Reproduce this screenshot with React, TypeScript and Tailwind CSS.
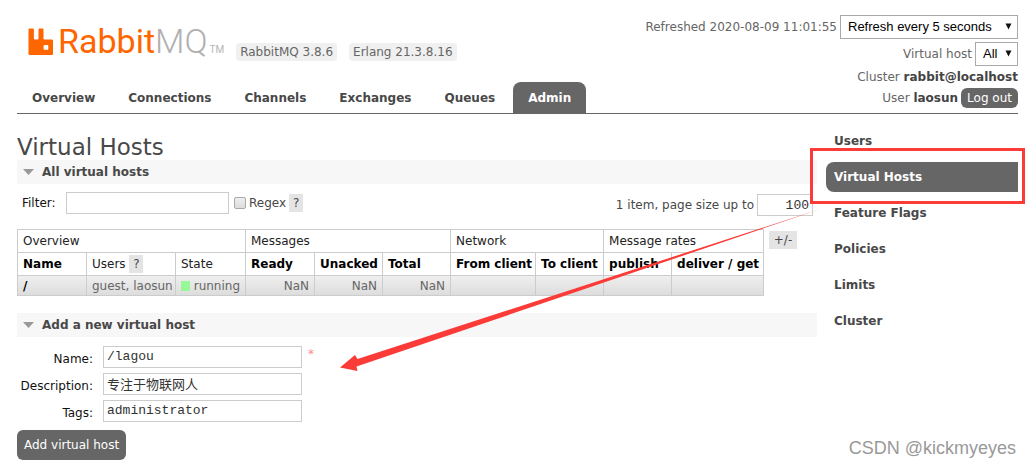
import type { ReactNode } from 'react';

const tabs = ['Overview', 'Connections', 'Channels', 'Exchanges', 'Queues', 'Admin'];
const adminLinks = ['Users', 'Virtual Hosts', 'Feature Flags', 'Policies', 'Limits', 'Cluster'];

/** Orange rabbit mark with the two-tone word mark. */
function Logo() {
  return (
    <a href="#/" className="flex items-end pb-[5px]" aria-label="RabbitMQ">
      <svg width="26" height="28" viewBox="0 0 26 28" fill="#ff6600" aria-hidden="true">
        <path
          fillRule="evenodd"
          d="M1.6 0.500h3.3q1 0 1 1v9q0 1 1 1h2.600q1 0 1-1V1.500q0-1 1-1h3q1 0 1 1v9q0 1 1 1h7.400q1.100 0 1.100 1.100v13.200q0 1.200-1.100 1.200H1.600q-1.100 0-1.100-1.100V1.500q0-1 1.100-1zM16.500 17q-.9 0-.9.9v2.900q0 .9.9.9h2.900q.9 0 .9-.9v-2.900q0-.9-.9-.9z"
        />
      </svg>
      <span className="pl-1 font-[Roboto,sans-serif] text-[34px] leading-[30px] text-[#ff6600]">
        Rabbit<span className="font-light text-[#b0b0b0]">MQ</span>
      </span>
      <span className="pl-0.5 font-[Roboto,sans-serif] text-[10px] leading-3 text-[#b5b5b5]">TM</span>
    </a>
  );
}

function Help() {
  return (
    <button type="button" className="h-[18px] w-3.5 bg-[#e4e4e4] text-[#484848]" aria-label="Help">
      ?
    </button>
  );
}

/** Drop-down with the small solid arrow. */
function Select({ id, value, className }: { id: string; value: string; className: string }) {
  return (
    <span className={`relative inline-block ${className}`}>
      <select
        id={id}
        className="h-6 w-full appearance-none border border-[#aaa] bg-white pl-[7px] font-['Liberation_Sans',sans-serif] text-[13px] text-black"
      >
        <option>{value}</option>
      </select>
      <svg className="pointer-events-none absolute top-2 right-1.5" width="7" height="7" viewBox="0 0 7 7">
        <path d="M0.5 0.5h6L3.5 6.5z" fill="#111" />
      </svg>
    </span>
  );
}

function Section({ title, children }: { title: string; children: ReactNode }) {
  return (
    <section>
      <h2 className="flex h-6 items-center gap-2 bg-[#f7f7f7] pl-1.5 text-xs font-bold">
        <svg width="11" height="6" viewBox="0 0 11 6" aria-hidden="true">
          <path d="M0 0h11L5.5 6z" fill="#999" />
        </svg>
        {title}
      </h2>
      {children}
    </section>
  );
}

function Field({ id, label, value, required }: { id: string; label: string; value: string; required?: boolean }) {
  return (
    <div className="flex items-center">
      <label htmlFor={id} className="w-[86px] pt-1 pr-2.5 text-right whitespace-nowrap text-[#111]">
        {label}
      </label>
      <input
        id={id}
        defaultValue={value}
        className="h-[22px] w-[199px] border border-[#ccc] px-[3px] pb-0.5 font-['Liberation_Mono','Noto_Sans_CJK_SC',monospace] text-[13px] text-[#333]"
      />
      {required && <span className="self-start pl-1.5 text-[#f88]">*</span>}
    </div>
  );
}

function HostTable() {
  return (
    <table className="w-[747px] table-fixed border-collapse whitespace-nowrap text-black [&_td]:border [&_td]:border-[#ccc] [&_td]:px-[5px] [&_td]:py-0 [&_th]:border [&_th]:border-[#ccc] [&_th]:pr-0 [&_th]:pl-[5px] [&_th]:text-left">
      <colgroup>
        <col className="w-[69px]" />
        <col className="w-[89px]" />
        <col className="w-[70px]" />
        <col className="w-[69px]" />
        <col className="w-[68px]" />
        <col className="w-[68px]" />
        <col className="w-[85px]" />
        <col className="w-[68px]" />
        <col className="w-[68px]" />
        <col />
      </colgroup>
      <thead>
        <tr className="h-[23px] text-[#222] [&>th]:font-normal">
          <th colSpan={3}>Overview</th>
          <th colSpan={3}>Messages</th>
          <th colSpan={2}>Network</th>
          <th colSpan={2}>Message rates</th>
        </tr>
        <tr className="h-[23px]">
          <th>Name</th>
          <th className="font-normal text-[#222]">
            Users <Help />
          </th>
          <th className="font-normal text-[#222]">State</th>
          <th>Ready</th>
          <th>Unacked</th>
          <th>Total</th>
          <th>From client</th>
          <th>To client</th>
          <th>publish</th>
          <th>deliver / get</th>
        </tr>
      </thead>
      <tbody>
        <tr className="h-5 bg-linear-to-b from-[#efefef] to-[#dcdcdc] text-right text-[#666]">
          <td className="text-left font-bold text-black">
            <a href="#/vhosts/%2F">/</a>
          </td>
          <td className="text-left">guest, laosun</td>
          <td className="text-left">
            <span className="flex items-center gap-1">
              <span className="size-2.5 bg-[#98f898]" />
              running
            </span>
          </td>
          <td>NaN</td>
          <td>NaN</td>
          <td>NaN</td>
          <td />
          <td />
          <td />
          <td />
        </tr>
      </tbody>
    </table>
  );
}

/** Red call-out arrow from the side menu to the form. */
function Arrow() {
  return (
    <svg
      className="pointer-events-none absolute top-[206px] right-[209px]"
      width="482"
      height="166"
      viewBox="0 0 482 166"
      fill="#fb3b38"
      aria-hidden="true"
    >
      <path d="M482 2.5L17.5 153L15 149L0 161.5L17.5 165L16.5 160.5z" />
    </svg>
  );
}

export default function App() {
  return (
    <div className="relative min-h-[468px] overflow-x-hidden bg-white font-['DejaVu_Sans',Verdana,sans-serif] text-xs leading-4 text-[#484848]">
      <header className="mr-[13px] ml-[17px] flex justify-between border-b border-[#666]">
        <div className="flex flex-col justify-between">
          <div className="flex items-end gap-3 pt-[26px] pl-[11px]">
            <Logo />
            <span className="rounded bg-[#f0f0f0] px-1 py-px text-[#666]">RabbitMQ 3.8.6</span>
            <span className="rounded bg-[#f0f0f0] px-1 py-px text-[#666]">Erlang 21.3.8.16</span>
          </div>
          <nav className="flex gap-[3px]">
            {tabs.map((tab) => (
              <a
                key={tab}
                href={`#/${tab.toLowerCase()}`}
                className={
                  tab === 'Admin'
                    ? 'rounded-t-lg bg-[#666] px-[15px] pt-2 pb-[7px] font-bold text-white'
                    : 'px-[15px] pt-2 pb-[7px] font-bold'
                }
              >
                {tab}
              </a>
            ))}
          </nav>
        </div>
        <div className="flex flex-col items-end gap-[3px] pt-[15px] pb-[5px] text-[#666]">
          <div className="flex items-center gap-[3px]">
            <label htmlFor="refresh">Refreshed 2020-08-09 11:01:55</label>
            <Select id="refresh" value="Refresh every 5 seconds" className="w-[178px]" />
          </div>
          <div className="flex items-center gap-[3px]">
            <label htmlFor="vhost">Virtual host</label>
            <Select id="vhost" value="All" className="w-[43px]" />
          </div>
          <div>
            Cluster <b className="text-[#444]">rabbit@localhost</b>
          </div>
          <div className="flex items-center gap-[3px]">
            <span>
              User <b className="text-[#444]">laosun</b>
            </span>
            <button type="button" className="h-5 rounded-md bg-[#666] px-1.5 text-white">
              Log out
            </button>
          </div>
        </div>
      </header>

      <div className="mr-[13px] ml-[17px] flex gap-[9px]">
        <main className="min-w-0 flex-1 pt-5">
          <h1 className="text-[23px] leading-[26px]">Virtual Hosts</h1>
          <Section title="All virtual hosts">
            <div className="flex items-start justify-between pt-2">
              <div className="flex items-center pl-[5px]">
                <label htmlFor="filter" className="w-11 text-[#111]">
                  Filter:
                </label>
                <input id="filter" className="h-[22px] w-[163px] border border-[#ccc] px-1" />
                <input
                  id="regex"
                  type="checkbox"
                  className="mr-[3px] ml-[5px] size-3 appearance-none rounded-xs border border-[#aaa] bg-linear-to-b from-[#eee] to-[#ddd]"
                />
                <label htmlFor="regex" className="pr-[3px]">
                  Regex
                </label>
                <Help />
              </div>
              <div className="flex items-center gap-[3px] pt-0.5 pr-1">
                <label htmlFor="page-size">1 item, page size up to</label>
                <input
                  id="page-size"
                  defaultValue="100"
                  className="h-[22px] w-14 border border-[#ccc] px-[3px] text-right font-['Liberation_Mono',monospace] text-[13px] text-[#333]"
                />
              </div>
            </div>
            <div className="flex items-start gap-[5px] pt-[13px]">
              <HostTable />
              <button type="button" className="mt-0.5 h-[18px] w-7 bg-[#e4e4e4]">
                +/-
              </button>
            </div>
          </Section>
          <div className="pt-[17px]">
            <Section title="Add a new virtual host">
              <form className="flex flex-col gap-[5px] pt-[9px]">
                <Field id="name" label="Name:" value="/lagou" required />
                <Field id="description" label="Description:" value="专注于物联网人" />
                <Field id="tags" label="Tags:" value="administrator" />
                <button type="button" className="mt-[3px] h-[30px] self-start rounded-md bg-[#666] px-[7px] text-white">
                  Add virtual host
                </button>
              </form>
            </Section>
          </div>
        </main>

        <nav className="flex w-48 shrink-0 flex-col gap-1.5 pt-3 font-bold">
          {adminLinks.map((link) =>
            link === 'Virtual Hosts' ? (
              <div key={link} className="relative">
                <a href="#/vhosts" className="block rounded-l-lg bg-[#666] px-2 py-[7px] text-white">
                  {link}
                </a>
                <div className="pointer-events-none absolute -top-3.5 -right-[7px] -bottom-3 -left-4 border-3 border-[#fb3b38]" />
              </div>
            ) : (
              <a key={link} href="#/" className="px-2 py-[7px]">
                {link}
              </a>
            ),
          )}
        </nav>
      </div>

      <Arrow />
      <p className="absolute right-[15px] bottom-2 font-['Liberation_Sans',sans-serif] text-lg leading-6 text-[#999]">
        CSDN @kickmyeyes
      </p>
    </div>
  );
}
